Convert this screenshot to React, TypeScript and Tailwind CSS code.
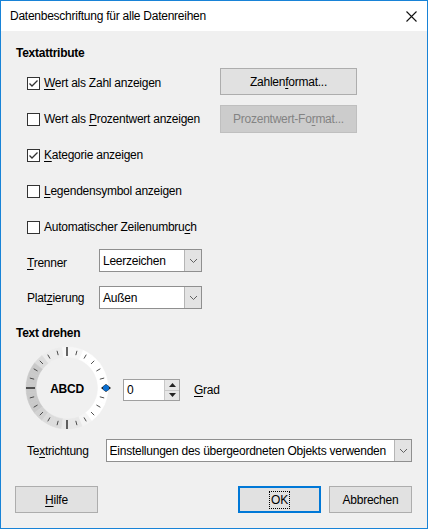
import React from "react";

const F = { fontFamily: '"Liberation Sans", Arial, sans-serif' };

function U({ children }: { children: React.ReactNode }) {
  return <span className="underline underline-offset-[2px] decoration-[1px]">{children}</span>;
}

function Checkbox({ checked }: { checked?: boolean }) {
  return (
    <div className="w-[13px] h-[13px] border border-[#333333] bg-white flex items-center justify-center shrink-0">
      {checked && (
        <svg width="11" height="11" viewBox="0 0 11 11">
          <polyline points="1.5,5.5 4,8 9.5,2.5" fill="none" stroke="#333333" strokeWidth="1.3" />
        </svg>
      )}
    </div>
  );
}

function CheckRow({ checked, children }: { checked?: boolean; children: React.ReactNode }) {
  return (
    <div className="flex items-center gap-[4px]">
      <Checkbox checked={checked} />
      <span className="leading-[16px] whitespace-nowrap">{children}</span>
    </div>
  );
}

function Chevron() {
  return (
    <svg width="9" height="6" viewBox="0 0 9 6">
      <polyline points="1,1 4.5,4.5 8,1" fill="none" stroke="#606060" strokeWidth="1" />
    </svg>
  );
}

function Select({ value, w, h }: { value: string; w: string; h: string }) {
  return (
    <div className={`flex ${w} ${h} border border-[#8f8f8f] bg-white`}>
      <div className="flex-1 flex items-center pl-[3px] whitespace-nowrap overflow-hidden leading-[16px]">{value}</div>
      <div className="w-[17px] border-l border-[#b5b5b5] bg-[#e3e3e3] flex items-center justify-center">
        <Chevron />
      </div>
    </div>
  );
}

function Dial() {
  const cx = 45;
  const cy = 45;
  const pt = (r: number, deg: number) => {
    const a = (deg * Math.PI) / 180;
    return [cx + r * Math.cos(a), cy - r * Math.sin(a)];
  };
  const color = (a: number) => {
    const m = ((a % 360) + 360) % 360;
    if (m < 75 || m >= 315) return "#ffffff";
    if (m < 105) return "#f7f7f7";
    if (m < 135) return "#ececec";
    if (m < 150) return "#dcdcdc";
    if (m < 225) return "#c9c9c9";
    if (m < 240) return "#d2d2d2";
    if (m < 270) return "#dcdcdc";
    if (m < 300) return "#e8e8e8";
    return "#f4f4f4";
  };
  const r1 = 31;
  const r2 = 41;
  const segs = [];
  for (let a = -7.5; a < 352.5; a += 15) {
    const [x1, y1] = pt(r2, a);
    const [x2, y2] = pt(r2, a + 15);
    const [x3, y3] = pt(r1, a + 15);
    const [x4, y4] = pt(r1, a);
    const d = `M${x1},${y1} A${r2},${r2} 0 0 0 ${x2},${y2} L${x3},${y3} A${r1},${r1} 0 0 1 ${x4},${y4} Z`;
    segs.push(<path key={a} d={d} fill={color(a + 7.5)} stroke={color(a + 7.5)} strokeWidth="0.5" />);
  }
  const ticks = [];
  for (let a = 15; a < 360; a += 15) {
    const major = a % 90 === 0;
    const [x1, y1] = pt(major ? 32 : 34, a);
    const [x2, y2] = pt(major ? 41 : 38.5, a);
    ticks.push(
      <line key={a} x1={x1} y1={y1} x2={x2} y2={y2} stroke={major ? "#000000" : "#3a3a3a"} strokeWidth={major ? 1.2 : 0.9} />
    );
  }
  return (
    <svg width="90" height="90" viewBox="0 0 90 90" className="shrink-0">
      {segs}
      {ticks}
      <polygon points="79,45 84,41 89,45 84,49" fill="#1c1c1c" />
      <circle cx="84" cy="45" r="3" fill="#0a6fd1" />
      <text x="45" y="49.5" textAnchor="middle" fontSize="12" fontWeight="bold" fill="#000" style={F}>
        ABCD
      </text>
    </svg>
  );
}

function Button({ children, cls }: { children: React.ReactNode; cls?: string }) {
  return (
    <div className={`h-[27px] flex items-center justify-center border border-[#adadad] bg-[#e1e1e1] ${cls ?? ""}`}>
      {children}
    </div>
  );
}

export default function App() {
  return (
    <div
      style={F}
      className="w-[428px] h-[529px] border border-[#1883d7] bg-[#f0f0f0] flex flex-col text-[12px] text-black tracking-[-0.25px] overflow-hidden"
    >
      {/* Title bar */}
      <div className="h-[30px] bg-white flex items-center justify-between pl-[9px] pr-[9px] shrink-0">
        <span className="leading-[16px]">Datenbeschriftung für alle Datenreihen</span>
        <svg width="11" height="11" viewBox="0 0 11 11" className="mr-[1px]">
          <path d="M0.5,0.5 L10.5,10.5 M10.5,0.5 L0.5,10.5" stroke="#111" strokeWidth="1.1" />
        </svg>
      </div>

      {/* Body */}
      <div className="flex flex-col px-[15px] pt-[14px]">
        <div className="font-bold leading-[16px]">Textattribute</div>

        <div className="flex flex-col pl-[11px] mt-[4px]">
          <div className="h-[36px] flex items-center justify-between pr-[55px]">
            <CheckRow checked>
              <U>W</U>ert als Zahl anzeigen
            </CheckRow>
            <Button cls="w-[137px] -mt-[3px]">
              <span>
                Zahlen<U>f</U>ormat...
              </span>
            </Button>
          </div>
          <div className="h-[36px] flex items-center justify-between pr-[55px]">
            <CheckRow>
              Wert als <U>P</U>rozentwert anzeigen
            </CheckRow>
            <div className="w-[137px] h-[28px] -mt-[1px] flex items-center justify-center border border-[#bfbfbf] bg-[#cccccc] text-[#838383]">
              <span>
                Prozentwert-Fo<U>r</U>mat...
              </span>
            </div>
          </div>
          <div className="h-[36px] flex items-center">
            <CheckRow checked>
              <U>K</U>ategorie anzeigen
            </CheckRow>
          </div>
          <div className="h-[36px] flex items-center">
            <CheckRow>
              <U>L</U>egendensymbol anzeigen
            </CheckRow>
          </div>
          <div className="h-[36px] flex items-center">
            <CheckRow>
              Automatischer Zeilenumbru<U>c</U>h
            </CheckRow>
          </div>

          <div className="h-[36px] flex items-start">
            <div className="w-[72px] mt-[10px] leading-[16px]">
              <U>T</U>renner
            </div>
            <div className="mt-[4px]">
              <Select value="Leerzeichen" w="w-[103px]" h="h-[23px]" />
            </div>
          </div>
          <div className="h-[36px] flex items-start">
            <div className="w-[72px] mt-[9px] leading-[16px]">
              Plat<U>z</U>ierung
            </div>
            <div className="mt-[5px]">
              <Select value="Außen" w="w-[103px]" h="h-[23px]" />
            </div>
          </div>
        </div>

        <div className="font-bold leading-[16px] mt-[8px]">Text drehen</div>

        <div className="flex items-center mt-[2px] pl-[6px]">
          <Dial />
          <div className="ml-[11px] mt-[4px] flex items-center">
            <div className="w-[57px] h-[22px] border border-[#a0a0a0] bg-white flex">
              <div className="flex-1 flex items-center pl-[3px] leading-[16px]">0</div>
              <div className="w-[15px] flex flex-col border-l border-[#c8c8c8]">
                <div className="flex-1 bg-[#e6e6e6] border-b border-[#c8c8c8] flex items-center justify-center">
                  <svg width="7" height="4" viewBox="0 0 7 4">
                    <polygon points="0,4 3.5,0 7,4" fill="#222" />
                  </svg>
                </div>
                <div className="flex-1 bg-[#e6e6e6] flex items-center justify-center">
                  <svg width="7" height="4" viewBox="0 0 7 4">
                    <polygon points="0,0 3.5,4 7,0" fill="#222" />
                  </svg>
                </div>
              </div>
            </div>
            <span className="ml-[14px] leading-[16px]">
              <U>G</U>rad
            </span>
          </div>
        </div>

        <div className="flex items-center mt-[6px] pl-[11px]">
          <div className="w-[79px] leading-[16px]">
            Te<U>x</U>trichtung
          </div>
          <Select value="Einstellungen des übergeordneten Objekts verwenden" w="w-[308px]" h="h-[23px]" />
        </div>

        <div className="flex items-center mt-[24px] -ml-px">
          <Button cls="w-[83px]">
            <span>
              <U>H</U>ilfe
            </span>
          </Button>
          <div className="flex-1" />
          <div className="w-[83px] h-[27px] flex items-center justify-center border-2 border-[#0078d7] bg-[#e1e1e1]">
            <span className="outline outline-1 outline-dotted outline-black px-[1px] leading-[16px]">OK</span>
          </div>
          <Button cls="w-[83px] ml-[8px]">
            <span>Abbrechen</span>
          </Button>
        </div>
      </div>
    </div>
  );
}
